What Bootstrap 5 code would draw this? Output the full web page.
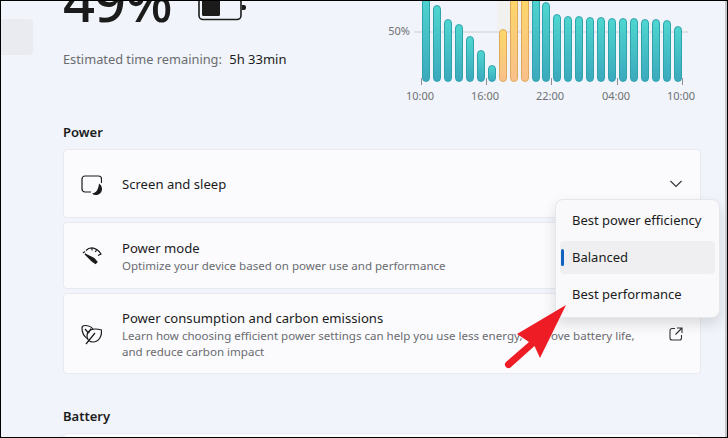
<!DOCTYPE html>
<html lang="en">
<head>
  <meta charset="UTF-8" />
  <meta name="viewport" content="width=device-width, initial-scale=1" />
  <title>Power &amp; battery</title>
  <link href="https://cdn.jsdelivr.net/npm/bootstrap@5.3.0/dist/css/bootstrap.min.css" rel="stylesheet" />
  <style>
    html, body { height: 100%; }
    body {
      background: #f1f4fa;
      font-family: "Noto Sans", "Liberation Sans", sans-serif;
      color: #1b1b1b;
      overflow: hidden;
    }
    .page-frame {
      position: relative;
      width: 728px;
      height: 438px;
      overflow: hidden;
      border: 1px solid #000;
      padding: 0 26px 0 62px;
    }
    .page-frame::after {
      content: "";
      position: absolute;
      top: 0;
      bottom: 0;
      left: 724px;
      width: 2px;
      background: #c4c6cb;
    }
    .side-item {
      position: absolute;
      left: 0;
      top: 18px;
      width: 32px;
      height: 36px;
      background: #e9ebf0;
      border-radius: 0 4px 4px 0;
    }
    .top-row { height: 122px; }
    .big-pct {
      font-size: 56px;
      font-weight: 500;
      line-height: 70px;
      margin-top: -36px;
      letter-spacing: -1px;
    }
    .batt-icon { margin: -1px 0 0 26px; }
    .est-line { font-size: 12.8px; margin-top: 15px; color: #6a6c70; }
    .est-line b { font-size: 13px; font-weight: 400; color: #1b1b1b; margin-left: 4px; }
    .chart-box { position: absolute; left: 380px; top: -1px; width: 320px; height: 110px; }
    .chart-lbl { position: absolute; font-size: 11px; color: #6f7175; line-height: 14px; transform: translateX(-50%); }
    .grid-50 { position: absolute; left: 33px; width: 274px; top: 31px; height: 2px; background: #dfe1e5; }
    .charge-bg { position: absolute; left: 116px; width: 34px; top: 0; height: 32px; background: #f1f1ef; }
    .bar-strip { position: absolute; left: 41px; top: 0; height: 82px; width: 260px; display: flex; align-items: flex-end; justify-content: space-between; }
    .bar-col {
      width: 8px;
      border-radius: 4px;
      border: 1px solid #2ea3ae;
      background: linear-gradient(#4fd6cf, #3ba9bd);
    }
    .bar-col.is-charging { border-color: #dfa95c; background: linear-gradient(#ffd867, #f9c08c); }
    .tick { position: absolute; top: 78px; width: 1px; height: 7px; background: #8d8f92; }
    .sect-title { font-size: 13px; font-weight: 600; margin: 0 0 8px; line-height: 18px; }
    .set-card {
      background: #fbfbfe;
      border: 1px solid #e8eaef;
      border-radius: 4px;
      margin-bottom: 4px;
      padding: 0 17px 0 16px;
      gap: 20px;
    }
    .card-a { height: 69px; }
    .card-b { height: 67px; padding-top: 1px; }
    .card-c { height: 81px; padding-top: 1px; }
    .set-ico { width: 22px; flex: none; }
    .set-title { font-size: 13.1px; line-height: 18px; }
    .set-sub { font-size: 11.55px; line-height: 16px; margin-top: 1px; color: #6a6c70; }
    .batt-head { margin-top: 33px; }
    .fly-menu {
      position: absolute;
      left: 554px;
      top: 198px;
      width: 165px;
      height: 119px;
      padding: 4px;
      background: #f9f9fb;
      border: 1px solid #e6e7eb;
      border-radius: 8px;
      box-shadow: 0 6px 14px rgba(0, 0, 0, .13);
    }
    .fly-opt { position: relative; height: 33px; margin-bottom: 4px; padding-left: 12px; font-size: 13px; line-height: 33px; border-radius: 4px; }
    .fly-opt.is-on { background: #efeff1; }
    .fly-opt.is-on::before { content: ""; position: absolute; left: 1px; top: 8px; width: 3px; height: 17px; border-radius: 2px; background: #0f62c0; }
    .red-arrow { position: absolute; left: 500px; top: 298px; }
  </style>
</head>
<body>
  <div class="page-frame">
    <div class="side-item"></div>

    <!-- Battery level + chart -->
    <div class="top-row">
      <div class="d-flex align-items-start">
        <div class="big-pct">49%</div>
        <svg class="batt-icon" width="50" height="24" viewBox="0 0 50 24" fill="none">
          <rect x="1" y="-4" width="42" height="23.500" rx="4" stroke="#1b1b1b" stroke-width="1.600" />
          <rect x="4" y="-2" width="18" height="18" rx="1.500" fill="#1b1b1b" />
          <path d="M44 5h2a2 2 0 0 1 2 2v1a2 2 0 0 1-2 2h-2z" fill="#1b1b1b" />
        </svg>
      </div>
      <div class="est-line">Estimated time remaining: <b>5h 33min</b></div>
    </div>

    <div class="chart-box">
      <div class="charge-bg"></div>
      <div class="grid-50"></div>
      <div class="chart-lbl" style="left:18px;top:24px">50%</div>
      <div class="bar-strip" id="barStrip"></div>
      <div id="ticks"></div>
    </div>

    <!-- Power section -->
    <h6 class="sect-title">Power</h6>
    <div class="set-card card-a d-flex align-items-center">
      <svg class="set-ico" width="22" height="22" viewBox="0 0 22 22" fill="none" stroke="#1b1b1b" stroke-width="1.200">
        <path d="M11 19H5A3 3 0 0 1 2 16V6A3 3 0 0 1 5 3H18.500A3 3 0 0 1 21.500 6V10" />
        <path d="M19 10.500a6 6 0 0 1 3 5.500 6 6 0 0 1-10 4.500c3.500 0 6.500-3.500 7-10z" fill="#1b1b1b" stroke="none" />
      </svg>
      <div class="set-title flex-grow-1">Screen and sleep</div>
      <svg width="14" height="8" viewBox="0 0 14 8" fill="none" stroke="#333" stroke-width="1.100"><path d="M1.500 1l5.500 5.500L12.500 1" /></svg>
    </div>
    <div class="set-card card-b d-flex align-items-center">
      <svg class="set-ico" width="22" height="22" viewBox="0 0 22 22" fill="none" stroke="#1b1b1b" stroke-width="1.200">
        <path d="M6 5.500C10 1.500 16.500 2 21 9l-3 1.500" />
        <path d="M12 3v2.500M16.500 5l-1.200 2" />
        <path d="M3 8l2-1.500" />
        <path d="M5 9l9 4.500 3 3.500-1.500 1.500-3.500-2.500z" fill="#1b1b1b" />
      </svg>
      <div class="flex-grow-1">
        <div class="set-title">Power mode</div>
        <div class="set-sub">Optimize your device based on power use and performance</div>
      </div>
    </div>
    <div class="set-card card-c d-flex align-items-center">
      <svg class="set-ico" width="22" height="22" viewBox="0 0 22 22" fill="none" stroke="#1b1b1b" stroke-width="1.200">
        <path d="M8 16C4.500 14 2 10 2 5 2 3.500 3 2.500 5 2.500 8 2.500 11 3.500 13 6" />
        <path d="M7 13C7 8 11 6 15 6 17.500 6 20 6.500 21.500 7 22 13 19 19 13 19 9.500 19 7 16.500 7 13z" />
        <path d="M5 6l3.500 4M11 5.500L8.500 10M6 21l9-11" />
      </svg>
      <div class="flex-grow-1">
        <div class="set-title">Power consumption and carbon emissions</div>
        <div class="set-sub">Learn how choosing efficient power settings can help you use less energy, improve battery life,<br />and reduce carbon impact</div>
      </div>
      <svg width="14" height="14" viewBox="0 0 14 14" fill="none" stroke="#333" stroke-width="1.100">
        <path d="M6 1.500H3A2 2 0 0 0 1 3.500v7.500a2 2 0 0 0 2 2h7.500a2 2 0 0 0 2-2V8" />
        <path d="M8 1h5v5M13 1L6.500 7.500" />
      </svg>
    </div>

    <h6 class="sect-title batt-head">Battery</h6>
    <div class="set-card card-a"></div>

    <!-- Power mode flyout -->
    <div class="fly-menu">
      <div class="fly-opt">Best power efficiency</div>
      <div class="fly-opt is-on">Balanced</div>
      <div class="fly-opt">Best performance</div>
    </div>

    <svg class="red-arrow" width="72" height="76" viewBox="0 0 72 76">
      <path d="M65 6L39 59 33.500 47 10 68a3.500 3.500 0 0 1-5-5L28 43 16 35z" fill="#ee1c25" />
    </svg>
  </div>

  <script>
    // top of each bar in px, index 7-9 are the charging ones
    const tops = [-6, 5, 19, 24, 36, 50, 65, 29, -6, -6, -6, 2, 14, 16, 16, 17, 17, 18, 18, 18, 19, 19, 20, 26];
    const strip = document.getElementById("barStrip");
    tops.forEach((t, i) => {
      const bar = document.createElement("div");
      bar.className = "bar-col" + (i >= 7 && i <= 9 ? " is-charging" : "");
      bar.style.height = (82 - t) + "px";
      strip.appendChild(bar);
    });

    const ticks = document.getElementById("ticks");
    [[40, "10:00"], [105, "16:00"], [170, "22:00"], [236, "04:00"], [301, "10:00"]].forEach(([x, label]) => {
      ticks.insertAdjacentHTML("beforeend",
        `<div class="tick" style="left:${x}px"></div><div class="chart-lbl" style="left:${x - 1}px;top:89px">${label}</div>`);
    });
  </script>

  <script src="https://cdn.jsdelivr.net/npm/bootstrap@5.3.0/dist/js/bootstrap.bundle.min.js"></script>
</body>
</html>
